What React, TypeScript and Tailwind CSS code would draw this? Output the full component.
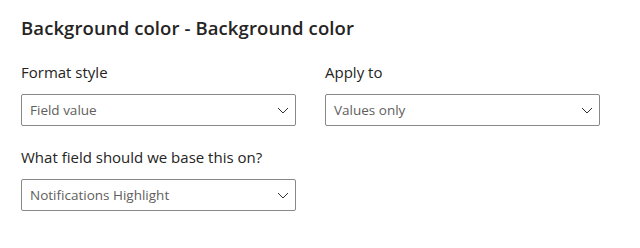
import { ReactNode } from "react";

const FONT = "font-['Segoe_UI','Open_Sans','Noto_Sans',sans-serif]";

function Chevron() {
	return (
		<svg width="12" height="7" viewBox="0 0 12 7" fill="none" className="shrink-0">
			<path d="M1 1l5 5l5-5" stroke="#323130" strokeWidth="1" />
		</svg>
	);
}

function Field({ label, value }: { label: string; value: string }) {
	return (
		<div className="flex flex-col w-[275px]">
			<div className="text-[15px] leading-5 text-[#252423] h-5">{label}</div>
			<div className="mt-[12px] h-[32px] border border-[#8a8886] rounded-[2px] flex items-center justify-between pl-[8px] pr-[6px]">
				<span className="text-[13.5px] text-[#605e5c]">{value}</span>
				<Chevron />
			</div>
		</div>
	);
}

function Row({ children }: { children: ReactNode }) {
	return <div className="flex gap-[29px]">{children}</div>;
}

export default function App() {
	return (
		<div className={`${FONT} w-[640px] h-[248px] bg-white pl-[21px] pt-[16px]`}>
			<h1 className="text-[18.5px] leading-6 font-semibold text-[#252423] tracking-[0.1px]">
				Background color - Background color
			</h1>
			<div className="mt-[22px] flex flex-col gap-[21px]">
				<Row>
					<Field label="Format style" value="Field value" />
					<Field label="Apply to" value="Values only" />
				</Row>
				<Row>
					<Field label="What field should we base this on?" value="Notifications Highlight" />
				</Row>
			</div>
		</div>
	);
}
